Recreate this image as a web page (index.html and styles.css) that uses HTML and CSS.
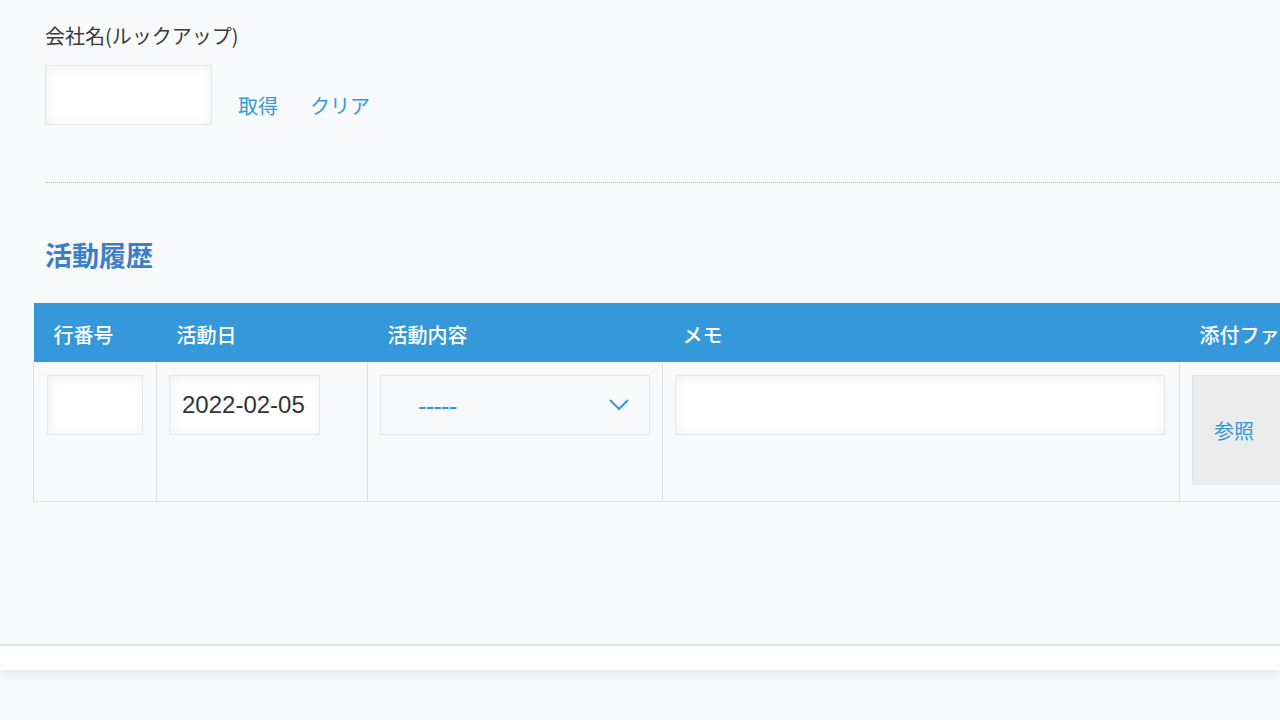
FILE: index.html
```html
<!DOCTYPE html>
<html lang="ja">
<head>
  <meta charset="UTF-8">
  <meta name="viewport" content="width=device-width, initial-scale=1.0">
  <title>活動履歴</title>
  <link rel="stylesheet" href="styles.css">
</head>
<body>
  <div class="form">
    <div class="field">
      <div class="field-label">会社名(ルックアップ)</div>
      <div class="lookup">
        <input type="text" class="text-input lookup-input">
        <a class="link-btn first">取得</a>
        <a class="link-btn">クリア</a>
      </div>
    </div>

    <div class="divider"></div>

    <h2 class="section-title">活動履歴</h2>

    <table class="subtable">
      <thead>
        <tr>
          <th class="col-no">行番号</th>
          <th class="col-date">活動日</th>
          <th class="col-type">活動内容</th>
          <th class="col-memo">メモ</th>
          <th class="col-file">添付ファイル</th>
        </tr>
      </thead>
      <tbody>
        <tr>
          <td><input type="text" class="text-input no-input"></td>
          <td><input type="text" class="text-input date-input" value="2022-02-05"></td>
          <td>
            <div class="select-box">
              <span class="select-value">-----</span>
              <svg class="chevron" width="20" height="12" viewBox="0 0 20 12">
                <polyline points="1,1 10,10 19,1" fill="none" stroke="#3498db" stroke-width="2"/>
              </svg>
            </div>
          </td>
          <td><input type="text" class="text-input memo-input"></td>
          <td><div class="file-btn">参照</div></td>
        </tr>
      </tbody>
    </table>
  </div>

  <div class="footer-bar"></div>
</body>
</html>
```

FILE: styles.css
```css
html, body {
  margin: 0;
  padding: 0;
}
body {
  font-family: "Noto Sans CJK JP", "Liberation Sans", sans-serif;
  background-color: #f7f9fa;
  color: #333;
  width: 1280px;
  height: 720px;
  overflow: hidden;
}
.form {
  padding: 22px 0 0 45px;
}
.field-label {
  font-size: 20px;
  line-height: 28px;
  color: #3a3a3a;
}
.lookup {
  display: flex;
  align-items: flex-end;
  margin-top: 15px;
}
.text-input {
  box-sizing: border-box;
  height: 60px;
  border: 1px solid #e3e7e8;
  background-color: #fff;
  box-shadow: 1px 1px 12px #f0f0f0 inset;
  outline: none;
  margin: 0;
  padding: 0 12px;
  font-family: "Liberation Sans", Arial, sans-serif;
  font-size: 24px;
  color: #333;
}
.lookup-input {
  width: 167px;
}
.link-btn {
  font-size: 20px;
  line-height: 28px;
  color: #3498db;
  margin-left: 32px;
  padding-bottom: 5px;
  cursor: pointer;
}
.link-btn.first {
  margin-left: 26px;
}
.divider {
  margin-top: 57px;
  border-top: 1px dotted #b8b8b8;
}
.section-title {
  margin: 54px 0 0;
  font-size: 27px;
  line-height: 36px;
  font-weight: bold;
  color: #3a7fc8;
}
.subtable {
  margin: 30px 0 0 -12px;
  border-collapse: collapse;
  table-layout: fixed;
  width: 1366px;
}
.subtable th {
  background-color: #3498db;
  color: #fff;
  font-size: 20px;
  font-weight: 500;
  text-align: left;
  height: 59px;
  padding: 3px 0 0 20px;
  box-sizing: border-box;
}
.col-no { width: 123px; }
.col-date { width: 211px; }
.col-type { width: 295px; }
.col-memo { width: 517px; }
.col-file { width: 220px; }
.subtable td {
  border: 1px solid #dcdfe0;
  border-top: none;
  padding: 13px 12px 16px;
  vertical-align: top;
}
.subtable td:first-child {
  padding-left: 13px;
}
.no-input {
  width: 96px;
}
.date-input {
  width: 151px;
}
.memo-input {
  width: 490px;
}
.select-box {
  box-sizing: border-box;
  width: 270px;
  height: 60px;
  border: 1px solid #e3e7e8;
  display: flex;
  align-items: center;
  justify-content: space-between;
  padding: 0 20px 0 37px;
}
.select-value {
  font-family: "Liberation Sans", Arial, sans-serif;
  font-size: 26px;
  letter-spacing: -1px;
  color: #3498db;
  padding-top: 3px;
}
.file-btn {
  box-sizing: border-box;
  width: 120px;
  height: 110px;
  background-color: #ececec;
  border: 1px solid #e3e3e3;
  display: flex;
  align-items: center;
  padding-left: 21px;
  font-size: 20px;
  color: #3498db;
}
.footer-bar {
  margin-top: 142px;
  height: 24px;
  background-color: #fff;
  border-top: 2px solid #dfe3e2;
  box-shadow: 0 4px 10px rgba(0, 0, 0, 0.07);
}
```
